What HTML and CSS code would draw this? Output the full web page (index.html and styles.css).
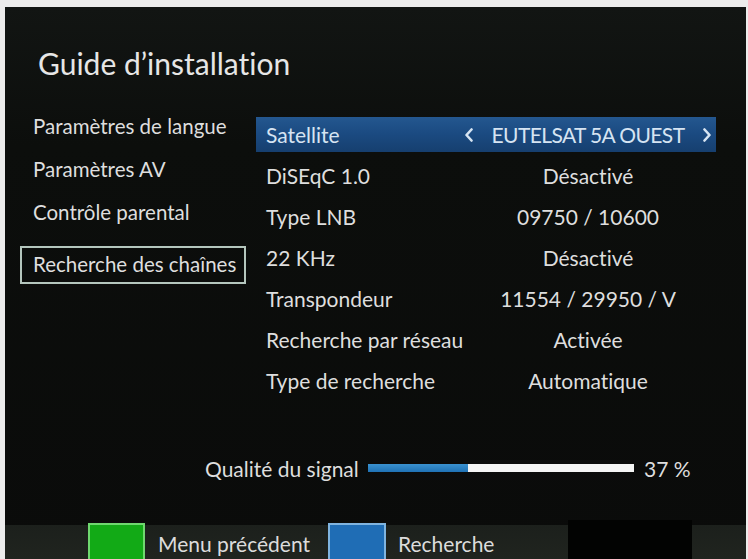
FILE: index.html
```html
<!DOCTYPE html>
<html lang="fr">
<head>
<meta charset="utf-8">
<title>Guide d’installation</title>
<link rel="stylesheet" href="styles.css">
</head>
<body>
<div class="screen">
  <h1 class="title">Guide d’installation</h1>
  <div class="main">
    <ul class="menu">
      <li class="menu-item">Paramètres de langue</li>
      <li class="menu-item">Paramètres AV</li>
      <li class="menu-item">Contrôle parental</li>
      <li class="menu-item active">Recherche des chaînes</li>
    </ul>
    <div class="settings">
      <div class="row selected">
        <span class="label">Satellite</span>
        <span class="value">
          <svg class="chev" width="10" height="14" viewBox="0 0 10 14"><polyline points="7.5,1.5 2.5,7 7.5,12.5" fill="none" stroke="#d6e4f2" stroke-width="2.6" stroke-linecap="round" stroke-linejoin="round"/></svg>
          <span class="value-text caps">EUTELSAT 5A OUEST</span>
          <svg class="chev" width="10" height="14" viewBox="0 0 10 14"><polyline points="2.5,1.5 7.5,7 2.5,12.5" fill="none" stroke="#d6e4f2" stroke-width="2.6" stroke-linecap="round" stroke-linejoin="round"/></svg>
        </span>
      </div>
      <div class="row"><span class="label">DiSEqC 1.0</span><span class="value"><span class="value-text">Désactivé</span></span></div>
      <div class="row"><span class="label">Type LNB</span><span class="value"><span class="value-text">09750 / 10600</span></span></div>
      <div class="row"><span class="label">22 KHz</span><span class="value"><span class="value-text">Désactivé</span></span></div>
      <div class="row"><span class="label">Transpondeur</span><span class="value"><span class="value-text">11554 / 29950 / V</span></span></div>
      <div class="row"><span class="label">Recherche par réseau</span><span class="value"><span class="value-text">Activée</span></span></div>
      <div class="row"><span class="label">Type de recherche</span><span class="value"><span class="value-text">Automatique</span></span></div>
    </div>
  </div>
  <div class="signal">
    <span class="signal-label">Qualité du signal</span>
    <div class="signal-bar"><div class="signal-fill" style="width: 37.5%"></div></div>
    <span class="signal-value">37 %</span>
  </div>
  <div class="footer">
    <span class="key key-green"></span>
    <span class="key-label">Menu précédent</span>
    <span class="key key-blue"></span>
    <span class="key-label">Recherche</span>
    <span class="footer-black"></span>
  </div>
</div>
</body>
</html>
```
FILE: styles.css
```css
html, body {
  margin: 0;
}
body {
  padding: 7px 0 0 5px;
  width: 748px;
  height: 559px;
  box-sizing: border-box;
  overflow: hidden;
  background: #ececec;
  font-family: Lato, "Liberation Sans", sans-serif;
  font-variant-ligatures: none;
}
.screen {
  width: 741px;
  height: 552px;
  display: flex;
  flex-direction: column;
  background: linear-gradient(180deg, #121513 0%, #0c0e0c 25%, #0a0b0a 100%);
  color: #dedede;
}
.title {
  margin: 36px 0 0 33px;
  font-size: 30px;
  line-height: 40px;
  font-weight: 400;
  color: #e6e6e6;
}
.main {
  display: flex;
  margin-top: 25px;
  gap: 10px;
}
.menu {
  list-style: none;
  margin: 0 0 0 15px;
  padding: 0;
  width: 226px;
  display: flex;
  flex-direction: column;
  gap: 8px;
}
.menu-item {
  height: 35px;
  line-height: 33px;
  padding: 0 11px;
  border: 2px solid transparent;
  font-size: 20.5px;
  white-space: nowrap;
  box-sizing: border-box;
}
.menu-item.active {
  margin-top: 9px;
  height: 38px;
  line-height: 33px;
  border: 2px solid #b4c6bd;
}
.settings {
  width: 460px;
  padding-top: 9px;
  display: flex;
  flex-direction: column;
  gap: 6px;
}
.row {
  height: 35px;
  display: flex;
  align-items: center;
  font-size: 21px;
  white-space: nowrap;
}
.row.selected {
  background: linear-gradient(180deg, #24578f 0%, #1b4b82 45%, #163f6f 100%);
  color: #d6e4f2;
}
.label {
  width: 196px;
  padding-left: 10px;
}
.value {
  flex: 1;
  display: flex;
  align-items: center;
  justify-content: center;
  padding: 0 4px 0 2px;
}
.selected .value {
  justify-content: space-between;
}
.caps {
  letter-spacing: -0.6px;
}
.chev {
  display: block;
}
.signal {
  display: flex;
  align-items: center;
  margin-top: 55px;
  height: 30px;
  padding-left: 200px;
  font-size: 21px;
}
.signal-label {
  width: 163px;
  white-space: nowrap;
}
.signal-bar {
  width: 266px;
  height: 8px;
  background: #f4f5f4;
  display: flex;
}
.signal-fill {
  height: 100%;
  background: linear-gradient(180deg, #3a92d0, #1f72b4);
}
.signal-value {
  margin-left: 10px;
}
.footer {
  margin-top: auto;
  height: 39px;
  display: flex;
  align-items: flex-end;
  background: linear-gradient(180deg, transparent 0, transparent 5px, #1c201c 5px, #20241f 100%);
  font-size: 21px;
}
.key {
  height: 36px;
  box-sizing: border-box;
}
.key-green {
  margin-left: 83px;
  width: 57px;
  background: #12aa16;
  border: 2px solid #6fd86f;
  border-bottom: 0;
}
.key-blue {
  width: 58px;
  background: #1f6db5;
  border: 2px solid #7fb4e0;
  border-bottom: 0;
}
.key-label {
  width: 183px;
  box-sizing: border-box;
  padding-left: 13px;
  line-height: 30px;
  white-space: nowrap;
  color: #dcdcdc;
}
.key-blue + .key-label {
  width: 182px;
  padding-left: 12px;
}
.footer-black {
  width: 124px;
  height: 39px;
  background: #020302;
}
```
